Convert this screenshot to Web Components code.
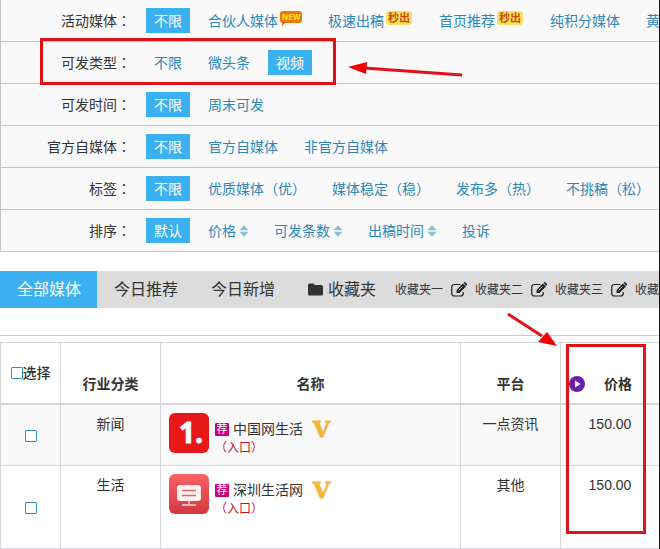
<!DOCTYPE html>
<html lang="zh-CN">
<head>
<meta charset="utf-8">
<meta name="viewport" content="width=device-width, initial-scale=1">
<title>媒体列表</title>
<style>
  body {
    margin: 0;
    background: #fff;
    color: #333;
    font: 14px/20px "Liberation Sans", "Noto Sans CJK SC", sans-serif;
  }
</style>
</head>
<body>

<media-page>
  <filter-panel>
    <filter-row label="活动媒体">
      <filter-option active>不限</filter-option>
      <filter-option badge="new">合伙人媒体</filter-option>
      <filter-option badge="fast">极速出稿</filter-option>
      <filter-option badge="fast">首页推荐</filter-option>
      <filter-option>纯积分媒体</filter-option>
      <filter-option>黄</filter-option>
    </filter-row>
    <filter-row label="可发类型">
      <filter-option>不限</filter-option>
      <filter-option>微头条</filter-option>
      <filter-option active>视频</filter-option>
    </filter-row>
    <filter-row label="可发时间">
      <filter-option active>不限</filter-option>
      <filter-option>周末可发</filter-option>
    </filter-row>
    <filter-row label="官方自媒体">
      <filter-option active>不限</filter-option>
      <filter-option>官方自媒体</filter-option>
      <filter-option>非官方自媒体</filter-option>
    </filter-row>
    <filter-row label="标签">
      <filter-option active>不限</filter-option>
      <filter-option>优质媒体（优）</filter-option>
      <filter-option>媒体稳定（稳）</filter-option>
      <filter-option>发布多（热）</filter-option>
      <filter-option>不挑稿（松）</filter-option>
    </filter-row>
    <filter-row label="排序">
      <filter-option active>默认</filter-option>
      <filter-option badge="sort">价格</filter-option>
      <filter-option badge="sort">可发条数</filter-option>
      <filter-option badge="sort">出稿时间</filter-option>
      <filter-option>投诉</filter-option>
    </filter-row>
  </filter-panel>

  <tab-bar>
    <tab-item active>全部媒体</tab-item>
    <tab-item>今日推荐</tab-item>
    <tab-item>今日新增</tab-item>
    <tab-item folder>收藏夹</tab-item>
    <favorite-item>收藏夹一</favorite-item>
    <favorite-item>收藏夹二</favorite-item>
    <favorite-item>收藏夹三</favorite-item>
    <favorite-item>收藏</favorite-item>
  </tab-bar>

  <media-table></media-table>
  <guide-marks></guide-marks>
</media-page>

<script>
class MediaPage extends HTMLElement {

  constructor() {
    super();
    this.attachShadow({mode: 'open'}).innerHTML = `
      <style>
        :host {
          display: block;
          position: relative;
          overflow: hidden;
          box-sizing: border-box;
          min-height: 100vh;
          border-right: 1px solid #111;
        }
      </style>
      <slot></slot>
    `;
  }
}

class FilterPanel extends HTMLElement {

  constructor() {
    super();
    this.attachShadow({mode: 'open'}).innerHTML = `
      <style>
        :host {
          display: block;
          background: #f9f9fa;
          border-left: 1px solid #c4c4c4;
        }
      </style>
      <slot></slot>
    `;
  }
}

class FilterRow extends HTMLElement {

  constructor() {
    super();
    this.attachShadow({mode: 'open'});
  }

  connectedCallback() {
    this.shadowRoot.innerHTML = `
      <style>
        :host {
          display: flex;
          align-items: center;
          height: 41px;
          border-bottom: 1px solid #c4c4c4;
          white-space: nowrap;
        }

        .label {
          flex: none;
          width: 130px;
          margin-right: 15px;
          text-align: right;
        }

        .colon {
          font-family: "Noto Sans CJK TC", sans-serif;
        }

        .options {
          display: flex;
          gap: 10px;
          min-width: 0;
          overflow: hidden;
        }
      </style>
      <span class="label">${this.getAttribute('label')}<span class="colon" lang="zh-TW">：</span></span>
      <div class="options"><slot></slot></div>
    `;
  }
}

const BADGES = {
  new: '<span class="badge new">NEW</span>',
  fast: '<span class="badge fast">秒出</span>',
  sort: `<svg class="sort" width="8" height="12" viewBox="0 0 8 12" aria-hidden="true">
      <path d="M0 5 4 0.500 8 5zM0 7 4 11.500 8 7z" fill="#8bbdd0" stroke="#8bbdd0" stroke-width="0.500"/>
    </svg>`
};

class FilterOption extends HTMLElement {

  constructor() {
    super();
    this.attachShadow({mode: 'open'});
  }

  connectedCallback() {
    this.shadowRoot.innerHTML = `
      <style>
        :host {
          display: block;
          flex: none;
        }

        a {
          display: flex;
          align-items: center;
          height: 25px;
          padding: 0 8px;
          color: #2f87b8;
          text-decoration: none;
        }

        :host([active]) a {
          background: #3cb1f1;
          color: #fff;
        }

        .badge {
          position: relative;
          height: 12px;
          margin: 0 0 8px 2px;
          border-radius: 3px;
          text-align: center;
        }

        .new {
          width: 22px;
          background: #f0760a;
          color: #ffe81c;
          font: bold 8px/12px "Open Sans", sans-serif;
        }

        /* tail of the speech bubble */
        .new::after {
          content: "";
          position: absolute;
          left: 2px;
          top: 11px;
          border: 2px solid transparent;
          border-top-color: #e0600a;
          border-left-color: #e0600a;
        }

        .fast {
          width: 26px;
          height: 14px;
          margin: 0 1px 5px 2px;
          background: #ffe05e;
          color: #c2500a;
          font-size: 11px;
          font-weight: bold;
          line-height: 14px;
        }

        .sort {
          margin-left: 4px;
        }
      </style>
      <a href="#"><slot></slot>${BADGES[this.getAttribute('badge')] || ''}</a>
    `;
  }
}

class TabBar extends HTMLElement {

  constructor() {
    super();
    this.attachShadow({mode: 'open'}).innerHTML = `
      <style>
        :host {
          display: flex;
          height: 37px;
          margin: 19px 0 27px;
          overflow: hidden;
          background: #dcdcdc;
          white-space: nowrap;
        }
      </style>
      <slot></slot>
    `;
  }
}

class TabItem extends HTMLElement {

  constructor() {
    super();
    this.attachShadow({mode: 'open'});
  }

  connectedCallback() {
    const folder = this.hasAttribute('folder') ? `
      <svg width="15" height="13" viewBox="0 0 15 13" aria-hidden="true">
        <path d="M0 2Q0 0.500 1.500 0.500H5Q6.300 0.500 6.500 2H13Q15 2 15 4V11Q15 12.500 13.500 12.500H1.500Q0 12.500 0 11Z" fill="#333"/>
      </svg>` : '';

    this.shadowRoot.innerHTML = `
      <style>
        :host {
          display: block;
          flex: none;
        }

        button {
          display: flex;
          align-items: center;
          gap: 5px;
          height: 100%;
          padding: 0 16px 0 17px;
          border: 0;
          background: none;
          color: #333;
          font: inherit;
          font-size: 16px;
          cursor: pointer;
        }

        :host([active]) button {
          background: #3cb1f1;
          color: #fff;
        }
      </style>
      <button type="button">${folder}<slot></slot></button>
    `;
  }
}

class FavoriteItem extends HTMLElement {

  constructor() {
    super();
    this.attachShadow({mode: 'open'}).innerHTML = `
      <style>
        :host {
          display: flex;
          flex: none;
          align-items: center;
          gap: 8px;
          padding: 0 5px 0 3px;
          font-size: 12px;
        }

        a {
          color: #333;
          text-decoration: none;
        }

        button {
          display: flex;
          padding: 0;
          border: 0;
          background: none;
          cursor: pointer;
        }
      </style>
      <a href="#"><slot></slot></a>
      <button type="button" aria-label="编辑">
        <svg width="16" height="15" viewBox="0 0 16 15" aria-hidden="true">
          <path d="M9.500 2.500H3.500Q0.700 2.500 0.700 5V11.500Q0.700 14 3.500 14H9.500Q12.300 14 12.300 11.500V10" fill="none" stroke="#222" stroke-width="1.200"/>
          <path d="M5.500 11V8L12 1.500 15 4.500 8.500 11Z" fill="#222"/>
          <path d="M12.600 0.900 13.300 0.200Q13.800-0.200 14.300 0.200L16 1.900Q16.400 2.400 16 2.900L15.400 3.700Z" fill="#222"/>
          <path d="M7.500 8.500 11.500 4.500" stroke="#ddd" stroke-width="0.800"/>
        </svg>
      </button>
    `;
  }
}

const LOGOS = {
  yidian: `
    <rect width="40" height="40" rx="6" fill="#e81818"/>
    <text x="10" y="30" font-family="Open Sans, sans-serif" font-weight="700" font-size="28" fill="#fff" stroke="#fff" stroke-linejoin="round">1.</text>`,
  board: `
    <defs>
      <linearGradient id="red" x2="0" y2="1">
        <stop stop-color="#fa6268"/>
        <stop offset="1" stop-color="#d2393f"/>
      </linearGradient>
    </defs>
    <rect width="40" height="40" rx="6" fill="url(#red)"/>
    <rect x="8" y="11" width="24" height="16" rx="3" fill="#fff1f0"/>
    <path d="M13 16.500H27M13 21.500H27" stroke="#e26266" stroke-width="1.500"/>
    <path d="M20 27V30M13 31H27" stroke="#ffd5d5" stroke-width="1.500"/>`
};

class MediaName extends HTMLElement {

  constructor() {
    super();
    this.attachShadow({mode: 'open'});
  }

  connectedCallback() {
    this.shadowRoot.innerHTML = `
      <style>
        :host {
          display: flex;
          gap: 6px;
          text-align: left;
        }

        .info {
          padding-top: 6px;
        }

        .title {
          display: flex;
          align-items: center;
          height: 20px;
        }

        .tag {
          width: 14px;
          height: 13px;
          margin-right: 4px;
          border-radius: 1px;
          background: #c9007a;
          color: #fff;
          font-size: 11px;
          line-height: 12px;
          text-align: center;
        }

        .vip {
          margin-left: 10px;
          color: #f2b63c;
          font: bold 22px/20px "DejaVu Serif", serif;
          -webkit-text-stroke: 1px #f2b63c;
        }

        .entry {
          display: block;
          color: #c8102e;
          font-size: 12px;
          line-height: 18px;
          text-decoration: none;
        }
      </style>
      <svg width="40" height="40" viewBox="0 0 40 40" aria-hidden="true">${LOGOS[this.getAttribute('logo')]}</svg>
      <div class="info">
        <div class="title">
          <span class="tag">荐</span><slot></slot><span class="vip">V</span>
        </div>
        <a class="entry" href="#">（入口）</a>
      </div>
    `;
  }
}

const MEDIA = [
  {type: '新闻', name: '中国网生活', logo: 'yidian', platform: '一点资讯', price: '150.00'},
  {type: '生活', name: '深圳生活网', logo: 'board', platform: '其他', price: '150.00'}
];

class MediaTable extends HTMLElement {

  constructor() {
    super();
    this.attachShadow({mode: 'open'});
  }

  connectedCallback() {
    this.shadowRoot.innerHTML = `
      <style>
        :host {
          display: block;
          padding-top: 6px;
          border-top: 1px solid #ccc;
        }

        table {
          width: 100%;
          table-layout: fixed;
          border-collapse: separate;
          border-spacing: 0;
          border-top: 1px solid #d6d6da;
        }

        th, td {
          box-sizing: border-box;
          padding: 9px 8px;
          border-left: 1px solid #d6d6da;
          border-bottom: 1px solid #d6d6da;
          text-align: center;
          vertical-align: top;
        }

        th {
          height: 62px;
          border-bottom-width: 2px;
          vertical-align: bottom;
        }

        th.check, td.check {
          padding: 0;
          vertical-align: middle;
        }

        td {
          height: 61px;
          padding-bottom: 0;
        }

        td.name {
          padding-top: 8px;
        }

        tbody tr:nth-child(odd) {
          background: #f9f9fa;
        }

        tbody tr:last-child td {
          height: 83px;
        }

        col.select {
          width: 60px;
        }

        col.type, col.platform {
          width: 100px;
        }

        col.price {
          width: 99px;
        }

        label {
          display: flex;
          align-items: center;
          justify-content: center;
          font-weight: 500;
        }

        input {
          appearance: none;
          box-sizing: border-box;
          flex: none;
          width: 12px;
          height: 12px;
          margin: 0;
          border: 1px solid #3090bd;
          border-radius: 1px;
          background: #fff;
          vertical-align: middle;
        }

        div.price {
          display: flex;
          align-items: center;
          justify-content: space-between;
          padding-right: 19px;
        }
      </style>
      <table>
        <colgroup>
          <col class="select"><col class="type"><col><col class="platform"><col class="price">
        </colgroup>
        <thead>
          <tr>
            <th class="check"><label><input type="checkbox">选择</label></th>
            <th>行业分类</th>
            <th>名称</th>
            <th>平台</th>
            <th>
              <div class="price">
                <svg width="16" height="16" viewBox="0 0 16 16" aria-hidden="true">
                  <circle cx="8" cy="8" r="8" fill="#6a1fa8"/>
                  <path d="M6 4.500 11.500 8 6 11.500Z" fill="#fff"/>
                </svg>
                价格
              </div>
            </th>
          </tr>
        </thead>
        <tbody>
          ${MEDIA.map(item => `
            <tr>
              <td class="check"><input type="checkbox" aria-label="${item.name}"></td>
              <td>${item.type}</td>
              <td class="name"><media-name logo="${item.logo}">${item.name}</media-name></td>
              <td>${item.platform}</td>
              <td>${item.price}</td>
            </tr>
          `).join('')}
        </tbody>
      </table>
    `;
  }
}

// red boxes and arrows laid over the page
class GuideMarks extends HTMLElement {

  constructor() {
    super();
    this.attachShadow({mode: 'open'}).innerHTML = `
      <style>
        :host {
          position: absolute;
          left: 0;
          top: 0;
          pointer-events: none;
        }

        svg {
          display: block;
        }
      </style>
      <svg width="660" height="549" viewBox="0 0 660 549" fill="none" stroke="#e01218" stroke-width="3" aria-hidden="true">
        <rect x="41.500" y="39.500" width="293" height="44"/>
        <rect x="567.500" y="345.500" width="77" height="187"/>
        <path d="M462 75 364 68"/>
        <path d="M348 67 367 62 366 74Z" fill="#f00000" stroke="none"/>
        <path d="M508 314 542 336"/>
        <path d="M557 346 547 332 538 342Z" fill="#f00000" stroke="none"/>
      </svg>
    `;
  }
}

customElements.define('media-page', MediaPage);
customElements.define('filter-panel', FilterPanel);
customElements.define('filter-row', FilterRow);
customElements.define('filter-option', FilterOption);
customElements.define('tab-bar', TabBar);
customElements.define('tab-item', TabItem);
customElements.define('favorite-item', FavoriteItem);
customElements.define('media-name', MediaName);
customElements.define('media-table', MediaTable);
customElements.define('guide-marks', GuideMarks);
</script>
</body>
</html>
